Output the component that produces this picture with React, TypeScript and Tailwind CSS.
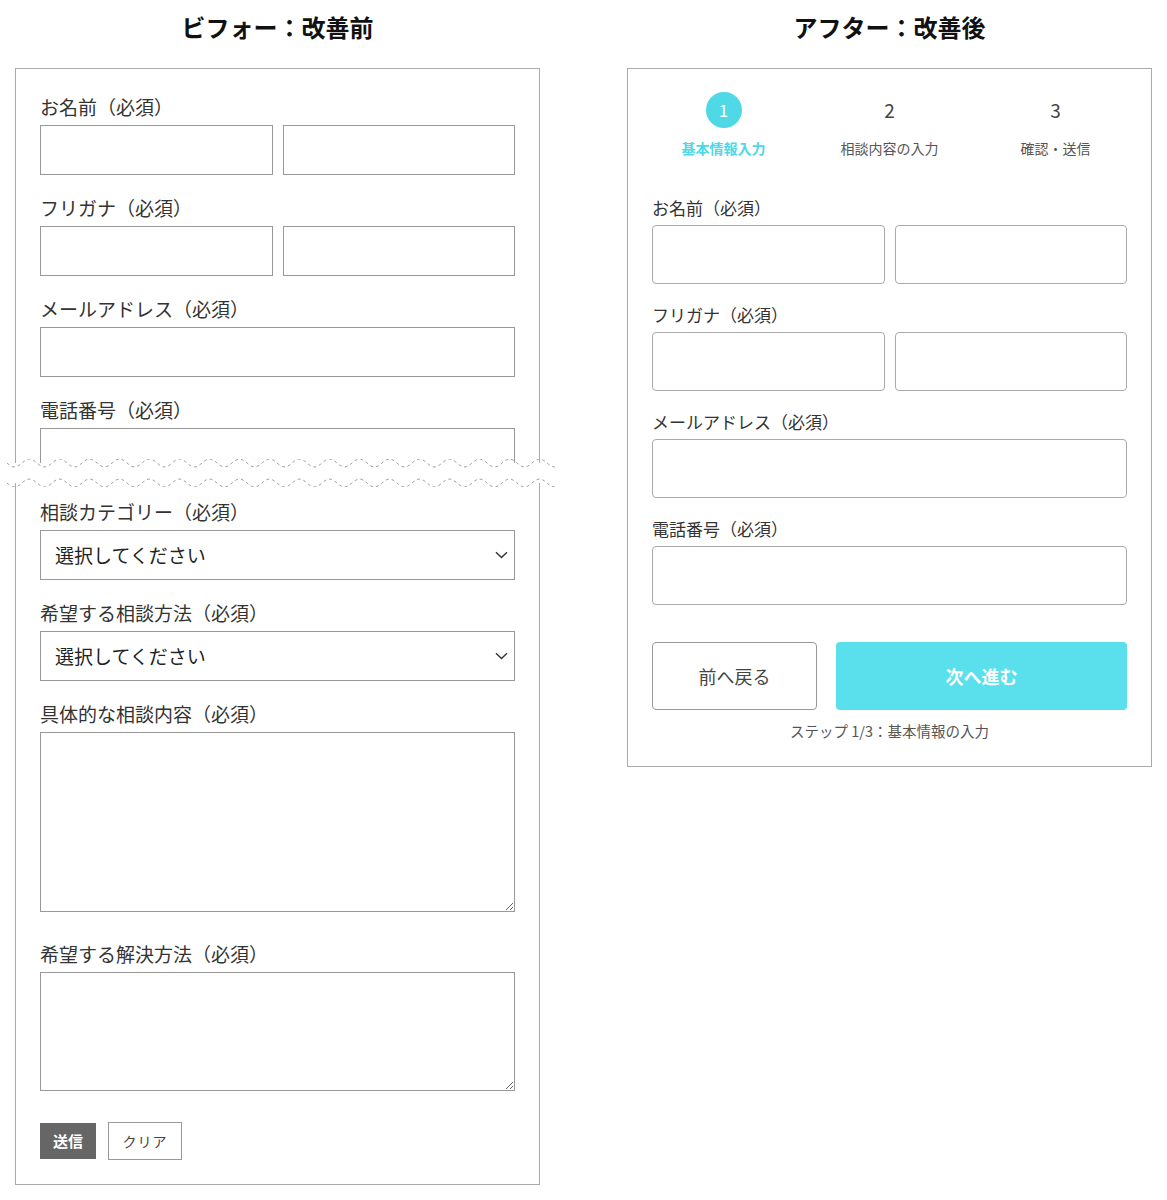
import React from 'react';

const FONT = "font-['Noto_Sans_CJK_JP','Noto_Sans',sans-serif]";

const wavePath = (y: number, w: number, period = 30, amp = 4) => {
  let d = `M0 ${y.toFixed(2)}`;
  for (let x = 2; x <= w; x += 2) {
    d += ` L${x} ${(y + amp * Math.sin((2 * Math.PI * x) / period)).toFixed(2)}`;
  }
  return d;
};

const Chevron = () => (
  <svg width="13" height="8" viewBox="0 0 13 8" fill="none">
    <path d="M1 1.2 L6.5 6.5 L12 1.2" stroke="#333" strokeWidth="1.4" />
  </svg>
);

const OldLabel: React.FC<{ children: React.ReactNode }> = ({ children }) => (
  <div className="text-[19px] leading-[26px] mb-[5px] text-[#333]">{children}</div>
);

const OldSelect = () => (
  <div className="h-[50px] border border-[#999] flex items-center justify-between pl-[14px] pr-[6px] text-[19px] text-[#222]">
    <span>選択してください</span>
    <Chevron />
  </div>
);

const BreakLine = () => (
  <svg width="551" height="28" className="block -ml-[8px] -mt-[4px] -mb-[4px]">
    <path d={wavePath(4, 551)} stroke="#a0a0a0" strokeWidth="1" strokeDasharray="3 3" fill="none" />
    <path d={wavePath(24, 551)} stroke="#a0a0a0" strokeWidth="1" strokeDasharray="3 3" fill="none" />
  </svg>
);

const BeforeForm = () => (
  <div className="w-[525px]">
    <h2 className="pt-[13px] h-[68px] text-center text-[24px] leading-[28px] font-bold text-[#111]">ビフォー：改善前</h2>
    <div className="border-t border-x border-[#aaa] px-[24px] pt-[25px] flex flex-col gap-[20px]">
      <div>
        <OldLabel>お名前（必須）</OldLabel>
        <div className="grid grid-cols-2 gap-[10px]">
          <input className="h-[50px] border border-[#999]" />
          <input className="h-[50px] border border-[#999]" />
        </div>
      </div>
      <div>
        <OldLabel>フリガナ（必須）</OldLabel>
        <div className="grid grid-cols-2 gap-[10px]">
          <input className="h-[50px] border border-[#999]" />
          <input className="h-[50px] border border-[#999]" />
        </div>
      </div>
      <div>
        <OldLabel>メールアドレス（必須）</OldLabel>
        <input className="block w-full h-[50px] border border-[#999]" />
      </div>
      <div>
        <OldLabel>電話番号（必須）</OldLabel>
        <div className="h-[35px] border-t border-x border-[#999]" />
      </div>
    </div>
    <BreakLine />
    <div className="border-x border-b border-[#aaa] px-[24px] pt-[16px] pb-[24px]">
      <OldLabel>相談カテゴリー（必須）</OldLabel>
      <OldSelect />
      <div className="mt-[20px]">
        <OldLabel>希望する相談方法（必須）</OldLabel>
        <OldSelect />
      </div>
      <div className="mt-[20px]">
        <OldLabel>具体的な相談内容（必須）</OldLabel>
        <textarea className="block w-full h-[180px] border border-[#999]" />
      </div>
      <div className="mt-[29px]">
        <OldLabel>希望する解決方法（必須）</OldLabel>
        <textarea className="block w-full h-[119px] border border-[#999]" />
      </div>
      <div className="mt-[31px] flex items-center gap-[12px]">
        <button className="w-[56px] h-[36px] bg-[#666] text-white text-[15px] font-bold">送信</button>
        <button className="w-[74px] h-[38px] border border-[#999] bg-white text-[14px] text-[#444] tracking-[1px]">クリア</button>
      </div>
    </div>
  </div>
);

const steps = [
  { n: '1', label: '基本情報入力', active: true },
  { n: '2', label: '相談内容の入力', active: false },
  { n: '3', label: '確認・送信', active: false },
];

const NewLabel: React.FC<{ children: React.ReactNode }> = ({ children }) => (
  <div className="text-[17px] leading-[24px] mb-[5px] text-[#333]">{children}</div>
);

const AfterForm = () => (
  <div className="w-[525px]">
    <h2 className="pt-[13px] h-[68px] text-center text-[24px] leading-[28px] font-bold text-[#111]">アフター：改善後</h2>
    <div className="border border-[#aaa] px-[24px] pt-[23px] pb-[25px]">
      <div className="flex justify-center">
        {steps.map((s) => (
          <div key={s.n} className="w-[166px] shrink-0 flex flex-col items-center">
            {s.active ? (
              <div className="w-[36px] h-[36px] rounded-full bg-[#4fd8e6] text-white text-[17px] flex items-center justify-center">
                {s.n}
              </div>
            ) : (
              <div className="h-[36px] flex items-center text-[19px] text-[#444]">{s.n}</div>
            )}
            <div
              className={`mt-[10px] text-[14px] leading-[20px] ${
                s.active ? 'text-[#4fd8e6] font-bold' : 'text-[#555]'
              }`}
            >
              {s.label}
            </div>
          </div>
        ))}
      </div>
      <div className="mt-[38px] flex flex-col gap-[19px]">
        <div>
          <NewLabel>お名前（必須）</NewLabel>
          <div className="grid grid-cols-2 gap-[10px]">
            <input className="h-[59px] border border-[#aaa] rounded-[4px]" />
            <input className="h-[59px] border border-[#aaa] rounded-[4px]" />
          </div>
        </div>
        <div>
          <NewLabel>フリガナ（必須）</NewLabel>
          <div className="grid grid-cols-2 gap-[10px]">
            <input className="h-[59px] border border-[#aaa] rounded-[4px]" />
            <input className="h-[59px] border border-[#aaa] rounded-[4px]" />
          </div>
        </div>
        <div>
          <NewLabel>メールアドレス（必須）</NewLabel>
          <input className="block w-full h-[59px] border border-[#aaa] rounded-[4px]" />
        </div>
        <div>
          <NewLabel>電話番号（必須）</NewLabel>
          <input className="block w-full h-[59px] border border-[#aaa] rounded-[4px]" />
        </div>
      </div>
      <div className="mt-[37px] flex gap-[19px]">
        <button className="w-[165px] h-[68px] border border-[#999] rounded-[4px] bg-white text-[18px] text-[#444]">前へ戻る</button>
        <button className="flex-1 h-[68px] rounded-[4px] bg-[#5ae0ec] text-white text-[18px] font-bold">次へ進む</button>
      </div>
      <div className="mt-[11px] text-center text-[14.5px] leading-[20px] text-[#555]">ステップ 1/3：基本情報の入力</div>
    </div>
  </div>
);

export default function App() {
  return (
    <div className={`${FONT} bg-white min-h-[1200px] w-[1167px] flex items-start pl-[15px] gap-[87px]`}>
      <BeforeForm />
      <AfterForm />
    </div>
  );
}
